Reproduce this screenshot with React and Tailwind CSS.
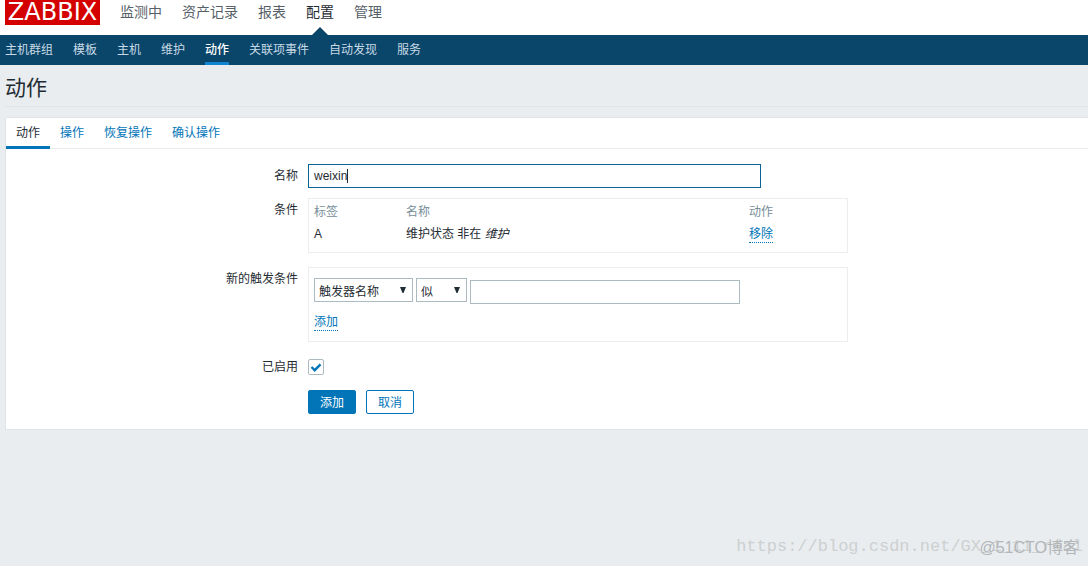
import React, { useState } from 'react';

const MAIN_MENU = ['监测中', '资产记录', '报表', '配置', '管理'];
const SUB_MENU = ['主机群组', '模板', '主机', '维护', '动作', '关联项事件', '自动发现', '服务'];
const TABS = ['动作', '操作', '恢复操作', '确认操作'];

function Logo() {
  return (
    <a href="#" aria-label="ZABBIX" className="flex h-[25px] w-[95px] items-center justify-center bg-[#d40000] text-2xl leading-[25px] text-white font-['DejaVu_Sans','Open_Sans',sans-serif]">
      ZABBIX
    </a>
  );
}

function MainMenu() {
  return (
    <header className="flex h-[35px] items-start gap-5 bg-white pl-[5px]">
      <Logo />
      <nav className="flex gap-5 text-sm leading-6 text-[#566068]">
        {MAIN_MENU.map((item) => (
          <a key={item} href="#" className={item === '配置' ? 'relative h-[35px] text-[#1f2c33]' : ''}>
            {item}
            {/* Flecha que une el menú activo con el submenú */}
            {item === '配置' && (
              <svg viewBox="0 0 16 8" className="absolute bottom-0 left-1/2 h-2 w-4 -translate-x-1/2">
                <path d="M8 0l8 8H0z" fill="#0a466a" />
              </svg>
            )}
          </a>
        ))}
      </nav>
    </header>
  );
}

function SubMenu() {
  return (
    <nav className="flex h-[30px] gap-5 bg-[#0a466a] pl-[5px] leading-[30px] text-[#c8dae5]">
      {SUB_MENU.map((item) => (
        <a
          key={item}
          href="#"
          className={item === '动作' ? 'border-b-3 border-[#0f85d1] font-medium text-white' : ''}
        >
          {item}
        </a>
      ))}
    </nav>
  );
}

function FormRow({ label, htmlFor, labelClass = 'pt-1', children }) {
  return (
    <div className="grid grid-cols-[292px_1fr] gap-[10px]">
      <label htmlFor={htmlFor} className={`text-right leading-4 ${labelClass}`}>
        {label}
      </label>
      <div>{children}</div>
    </div>
  );
}

function Select({ id, label, options, className }) {
  return (
    <div className={`relative h-6 ${className}`}>
      <select
        id={id}
        aria-label={label}
        className="h-full w-full appearance-none border border-[#acbbc2] bg-white pt-1 pl-1 text-[#1f2c33] outline-none"
      >
        {options.map((option) => (
          <option key={option}>{option}</option>
        ))}
      </select>
      <svg viewBox="0 0 6 6" className="pointer-events-none absolute top-[9px] right-[7px] h-1.5 w-1.5">
        <path d="M0 0h6L3.500 6h-1z" fill="#1f2c33" />
      </svg>
    </div>
  );
}

function ActionLink({ children }) {
  return (
    <a href="#" className="inline-block border-b border-dotted border-[#0275b8] leading-4 text-[#0275b8]">
      {children}
    </a>
  );
}

function Conditions() {
  return (
    <div className="max-w-[540px] border border-[#ebeef0] px-[5px] pt-0.5 pb-[7px]">
      <table className="w-full table-fixed text-left">
        <thead className="text-[#768d99]">
          <tr className="h-[22px]">
            <th className="w-[92px] font-normal">标签</th>
            <th className="w-[343px] font-normal">名称</th>
            <th className="font-normal">动作</th>
          </tr>
        </thead>
        <tbody>
          <tr className="h-[22px]">
            <td>A</td>
            <td>
              维护状态 非在 <em>维护</em>
            </td>
            <td>
              <ActionLink>移除</ActionLink>
            </td>
          </tr>
        </tbody>
      </table>
    </div>
  );
}

export default function App() {
  const [name, setName] = useState('weixin');
  const [enabled, setEnabled] = useState(true);

  return (
    <div className="relative min-h-screen bg-[#e9edf0] text-xs leading-4 text-[#1f2c33] font-['Liberation_Sans','Noto_Sans_CJK_SC',sans-serif]">
      <MainMenu />
      <SubMenu />

      <main className="pl-[5px]">
        <h1 className="mb-[10px] border-b border-[#dfe4e7] pt-[7px] pb-0.5 text-[21px] leading-8">动作</h1>

        <form className="border border-r-0 border-[#dfe4e7] bg-white" onSubmit={(e) => e.preventDefault()}>
          <div className="flex h-[31px] border-b border-[#e9edf0] leading-[30px]">
            {TABS.map((tab, i) => (
              <a
                key={tab}
                href="#"
                className={i === 0 ? 'h-[31px] border-b-3 border-[#0275b8] px-[10px]' : 'px-[10px] text-[#0275b8]'}
              >
                {tab}
              </a>
            ))}
          </div>

          <div className="flex flex-col pt-[15px] pb-[15px]">
            <FormRow label="名称" htmlFor="name">
              <div className="relative h-6 max-w-[453px]">
                <input
                  id="name"
                  type="text"
                  value={name}
                  onChange={(e) => setName(e.target.value)}
                  className="h-full w-full border border-[#0a6299] bg-white px-[5px] caret-transparent outline-none"
                />
                {/* Cursor de texto del campo con foco */}
                <span className="absolute top-[5px] left-[39px] h-[14px] w-px bg-[#1f2c33]" />
              </div>
            </FormRow>

            <div className="mt-[10px]">
              <FormRow label="条件">
                <Conditions />
              </FormRow>
            </div>

            <div className="mt-[14px]">
              <FormRow label="新的触发条件" htmlFor="condition-type">
                <div className="max-w-[540px] border border-[#ebeef0] px-[5px] pt-[10px] pb-[10px]">
                  <div className="flex items-start gap-[3px]">
                    <Select id="condition-type" options={['触发器名称', '触发器', '主机']} className="w-[99px]" />
                    <Select id="operator" label="运算符" options={['似', '非似']} className="w-[51px]" />
                    <input
                      type="text"
                      aria-label="值"
                      className="mt-0.5 h-6 w-[270px] border border-[#acbbc2] bg-white px-[5px] outline-none"
                    />
                  </div>
                  <div className="mt-[10px] flex">
                    <ActionLink>添加</ActionLink>
                  </div>
                </div>
              </FormRow>
            </div>

            <div className="mt-[17px]">
              <FormRow label="已启用" htmlFor="enabled" labelClass="">
                <div className="relative h-4 w-4">
                  <input
                    id="enabled"
                    type="checkbox"
                    checked={enabled}
                    onChange={(e) => setEnabled(e.target.checked)}
                    className="block h-4 w-4 appearance-none rounded-xs border border-[#acbbc2] bg-white"
                  />
                  {enabled && (
                    <svg viewBox="0 0 16 16" className="pointer-events-none absolute inset-0 h-4 w-4">
                      <path d="M3.500 8l3.200 3.200L12.500 5.300" fill="none" stroke="#0275b8" strokeWidth="2.400" />
                    </svg>
                  )}
                </div>
              </FormRow>
            </div>

            <div className="mt-[15px]">
              <FormRow>
                <div className="flex gap-[10px]">
                  <button type="submit" className="h-6 w-12 rounded-xs border border-[#0275b8] bg-[#0275b8] pt-0.5 text-white">
                    添加
                  </button>
                  <button type="button" className="h-6 w-12 rounded-xs border border-[#0275b8] bg-white pt-0.5 text-[#0275b8]">
                    取消
                  </button>
                </div>
              </FormRow>
            </div>
          </div>
        </form>
      </main>

      {/* Marcas de agua superpuestas */}
      <span className="pointer-events-none absolute right-[5px] bottom-[7px] text-[17px] leading-6 text-[#cdd0d0] font-['Liberation_Mono',monospace]">
        https://blog.csdn.net/GX_1_11_real
      </span>
      <span className="pointer-events-none absolute right-[9px] bottom-[6px] text-base leading-6 text-[#b3b6b8]">
        @51CTO博客
      </span>
    </div>
  );
}
